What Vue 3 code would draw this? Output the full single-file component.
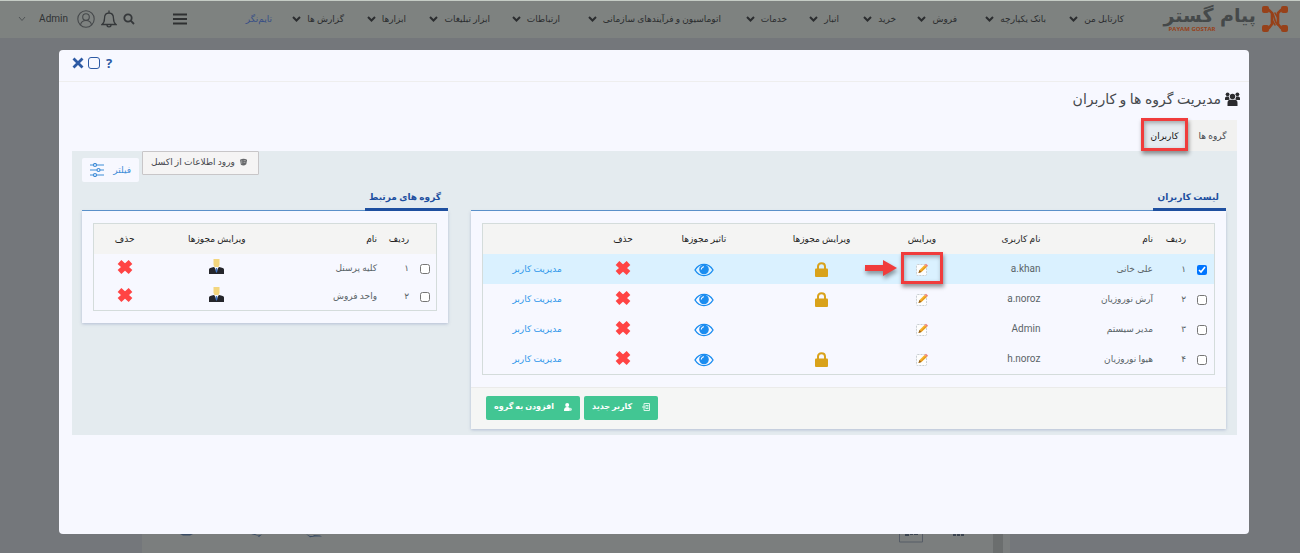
<script setup>
import { ref } from 'vue'

const menu = [
  'کارتابل من',
  'بانک یکپارچه',
  'فروش',
  'خرید',
  'انبار',
  'خدمات',
  'اتوماسیون و فرآیندهای سازمانی',
  'ارتباطات',
  'ابزار تبلیغات',
  'ابزارها',
  'گزارش ها',
]

const users = ref([
  { no: '۱', name: 'علی خانی', login: 'a.khan', lock: true, checked: true },
  { no: '۲', name: 'آرش نوروزیان', login: 'a.noroz', lock: true, checked: false },
  { no: '۳', name: 'مدیر سیستم', login: 'Admin', lock: false, checked: false },
  { no: '۴', name: 'هیوا نوروزیان', login: 'h.noroz', lock: true, checked: false },
])

const groups = ref([
  { no: '۱', name: 'کلیه پرسنل', checked: false },
  { no: '۲', name: 'واحد فروش', checked: false },
])
</script>

<template>
  <div class="page" dir="rtl">
    <header class="topbar">
      <a href="#" class="brand">
        <svg class="mark" viewBox="0 0 26 26" aria-hidden="true">
          <g fill="none" stroke="#974119" stroke-width="2.600" stroke-linecap="round">
            <path d="M4 4h3l3 3v11l-3 4H4" />
            <path d="M22 4h-3l-3 3v11l3 4h3" />
            <path d="M10 7c3 2 2 10 6 12" stroke-width="1.800" />
            <path d="M13 7l3 5M10 14l3 5" stroke-width="1.500" />
          </g>
          <g fill="#974119">
            <rect x="0" y="0" width="7" height="7" rx="2" />
            <rect x="19" y="0" width="7" height="7" rx="2" />
            <rect x="0" y="19" width="7" height="7" rx="2" />
            <rect x="19" y="19" width="7" height="7" rx="2" />
          </g>
        </svg>
        <span class="word"><strong>پیام گستر</strong><small>PAYAM GOSTAR</small></span>
      </a>
      <nav class="menu">
        <a v-for="item in menu" :key="item" href="#">
          {{ item }}
          <svg viewBox="0 0 9 6" aria-hidden="true"><path d="M1 1l3.500 3.500L8 1" /></svg>
        </a>
        <a href="#" class="timer">تایم‌نگر</a>
      </nav>
      <button class="icon burger" aria-label="menu">
        <svg viewBox="0 0 14 12"><path d="M0 1.500h14M0 6h14M0 10.500h14" stroke="#2e3031" stroke-width="1.800" /></svg>
      </button>
      <div class="account">
        <button class="icon" aria-label="search">
          <svg width="12" height="12" viewBox="0 0 12 12" fill="none" stroke="#35383a" stroke-width="1.800"><circle cx="5" cy="5" r="3.700" /><path d="M7.700 7.700l3.300 3.300" /></svg>
        </button>
        <button class="icon" aria-label="notifications">
          <svg width="16" height="18" viewBox="0 0 16 18" fill="none" stroke="#35383a" stroke-width="1.300"><path d="M1 14.500c2.500-2 2.500-3.500 2.500-6C3.500 5 5 3 8 3s4.500 2 4.500 5.500c0 2.500 0 4 2.500 6zM8 3V.500M6 15c0 2.500 4 2.500 4 0" /></svg>
        </button>
        <button class="icon" aria-label="profile">
          <svg width="18" height="18" viewBox="0 0 18 18" fill="none" stroke="#45484a" stroke-width="1.100"><circle cx="9" cy="9" r="8.200" /><circle cx="9" cy="7" r="3.300" /><path d="M3.500 15c.5-3 2.500-4.500 5.500-4.500s5 1.500 5.500 4.500" /></svg>
        </button>
        <a href="#" class="me">Admin</a>
        <svg class="thin" width="8" height="6" viewBox="0 0 8 6" aria-hidden="true"><path d="M1 1l3 3.500 3-3.500" fill="none" stroke="#505456" /></svg>
      </div>
    </header>

    <main class="dialog">
      <div class="titlebar">
        <button class="icon" aria-label="close">
          <svg width="12" height="12" viewBox="0 0 12 12"><path d="M1.500 1.500l9 9M10.500 1.500l-9 9" stroke="#2d5aa4" stroke-width="2.800" /></svg>
        </button>
        <button class="icon square" aria-label="maximize"></button>
        <button class="icon help">?</button>
      </div>

      <h1>
        <svg width="15" height="14" viewBox="0 0 15 14" fill="#2b2b2e" aria-hidden="true">
          <circle cx="2.600" cy="2.300" r="1.900" /><circle cx="12.400" cy="2.300" r="1.900" /><circle cx="7.500" cy="4.500" r="2.700" />
          <path d="M0 8V6.500C0 5 1 4.500 2.500 4.500h1.300c.2 1.300.6 2 1 2.700L3.500 8zM15 8V6.500c0-1.500-1-2-2.500-2h-1.300c-.2 1.300-.6 2-1 2.700l1.300.8zM2.500 14v-3c0-2 1-3.200 3-3.200h4c2 0 3 1.200 3 3.200v3z" />
        </svg>
        مدیریت گروه ها و کاربران
      </h1>

      <div class="tabs" role="tablist">
        <button role="tab" aria-selected="false">گروه ها</button>
        <button role="tab" class="active" aria-selected="true">کاربران</button>
      </div>

      <div class="panel">
        <div class="tools">
          <button class="excel">
            <svg width="8" height="8" viewBox="0 0 8 8" aria-hidden="true"><path d="M0 1.500Q4-.5 8 1.500L7 6.500Q4 9 1 7z" fill="#66676a" /><path d="M2 2v4M4 2.500h2.500M4 4.500h2" stroke="#bbb" stroke-width=".8" /></svg>
            ورود اطلاعات از اکسل
          </button>
          <button class="filter">
            فیلتر
            <svg width="14" height="14" viewBox="0 0 14 14" fill="none" stroke="#3f8dd8" stroke-width="1.200" aria-hidden="true"><path d="M0 2h14M0 7h14M0 12h14" /><g fill="#f7f8ff"><circle cx="5" cy="2" r="1.500" /><circle cx="8.500" cy="7" r="1.500" /><circle cx="5" cy="12" r="1.500" /></g></svg>
          </button>
        </div>

        <div class="columns">
          <section class="users">
            <div class="heading"><h2>لیست کاربران</h2></div>
            <div class="card">
              <div class="body">
                <table>
                  <colgroup>
                    <col class="u1" /><col class="u2" /><col class="u3" /><col class="u4" /><col class="u5" /><col class="u6" /><col class="u7" /><col class="u5" /><col class="u9" />
                  </colgroup>
                  <thead>
                    <tr>
                      <th></th><th>ردیف</th><th>نام</th><th>نام کاربری</th>
                      <th class="mid">ویرایش</th><th class="mid">ویرایش مجوزها</th><th class="mid">تاثیر مجوزها</th><th class="mid">حذف</th><th></th>
                    </tr>
                  </thead>
                  <tbody>
                    <tr v-for="(u, i) in users" :key="u.login" :class="{ on: u.checked }">
                      <td class="mid"><input v-model="u.checked" type="checkbox" :aria-label="u.name" /></td>
                      <td>{{ u.no }}</td>
                      <td>{{ u.name }}</td>
                      <td><bdi>{{ u.login }}</bdi></td>
                      <td class="mid">
                        <div class="spot">
                          <button class="icon" aria-label="ویرایش">
                            <svg width="12" height="13" viewBox="0 0 12 13"><rect x=".5" y="1.500" width="10" height="11" rx="1" fill="#fdfdfd" stroke="#c9cfd3" stroke-dasharray="2 1" /><path d="M2.500 10l1-3L8.500 2l2.500 2L5.500 9z" fill="#f5b32c" /><path d="M8.500 2L10 .8l2 1.700L11 4z" fill="#f0837a" /><path d="M2.500 10l1-3 2 2z" fill="#8a5a24" /><path d="M5 8.500l5-5" stroke="#d98614" stroke-width=".9" /></svg>
                          </button>
                          <template v-if="i === 0">
                            <span class="ring"></span>
                            <svg class="arrow" width="32" height="16" viewBox="0 0 32 16" aria-hidden="true"><path d="M0 5h18V0l14 8-14 8v-5H0z" fill="#f03c3c" /></svg>
                          </template>
                        </div>
                      </td>
                      <td class="mid">
                        <button v-if="u.lock" class="icon" aria-label="ویرایش مجوزها">
                          <svg width="13" height="15" viewBox="0 0 13 15"><path d="M3 7V4.500C3 2.500 4.300 1.200 6.500 1.200S10 2.500 10 4.500V7" fill="none" stroke="#d9a21a" stroke-width="2" /><rect y="6.500" width="13" height="8.500" rx="1" fill="#d9a21a" /></svg>
                        </button>
                      </td>
                      <td class="mid">
                        <button class="icon" aria-label="تاثیر مجوزها">
                          <svg width="20" height="14" viewBox="0 0 20 14"><path d="M1 7c4.500-7.500 13.500-7.500 18 0-4.500 7.500-13.500 7.500-18 0z" fill="none" stroke="#1b8df0" stroke-width="1.400" /><circle cx="10" cy="6.500" r="4.800" fill="#1b8df0" /><path d="M7.300 6.500A2.700 2.700 0 0 1 10 3.800" fill="none" stroke="#f7f8ff" stroke-width="1.100" /></svg>
                        </button>
                      </td>
                      <td class="mid">
                        <button class="icon cross" aria-label="حذف">
                          <svg width="16" height="16" viewBox="0 0 16 16"><path d="M2.500 3l11 10M13.500 3l-11 10" stroke="#ff4444" stroke-width="5.500" stroke-linejoin="round" /></svg>
                        </button>
                      </td>
                      <td class="mid"><a href="#">مدیریت کاربر</a></td>
                    </tr>
                  </tbody>
                </table>
              </div>
              <footer>
                <button class="green">
                  <svg width="8" height="8" viewBox="0 0 8 8" fill="none" stroke="#d9f5e9" aria-hidden="true"><path d="M2 .5h5.500v7H2zM0 4h4M3.500 2.500h3M4.500 4h2M3.500 5.500h3" /></svg>
                  کاربر جدید
                </button>
                <button class="green">
                  <svg width="8" height="8" viewBox="0 0 8 8" fill="#fff" aria-hidden="true"><circle cx="3.200" cy="2" r="2" /><path d="M0 8c0-3 1-4 3.200-4 1 0 1.800.3 2.300.8V8z" /><circle cx="6.300" cy="6.300" r="1.600" opacity=".7" /></svg>
                  افزودن به گروه
                </button>
              </footer>
            </div>
          </section>

          <section class="groups">
            <div class="heading"><h2>گروه های مرتبط</h2></div>
            <div class="card">
              <div class="body">
                <table>
                  <colgroup>
                    <col class="g1" /><col class="g2" /><col class="g3" /><col class="g4" /><col class="g5" />
                  </colgroup>
                  <thead>
                    <tr><th></th><th>ردیف</th><th>نام</th><th class="mid">ویرایش مجوزها</th><th class="mid">حذف</th></tr>
                  </thead>
                  <tbody>
                    <tr v-for="g in groups" :key="g.no">
                      <td class="mid"><input v-model="g.checked" type="checkbox" :aria-label="g.name" /></td>
                      <td>{{ g.no }}</td>
                      <td>{{ g.name }}</td>
                      <td class="mid">
                        <button class="icon cross" aria-label="ویرایش مجوزها">
                          <svg width="15" height="15" viewBox="0 0 15 15"><path d="M4.500 0h6v6l-1.500 3h-3l-1.500-3z" fill="#f3d67e" /><path d="M0 15v-4.500C0 9 2 8.500 5 8l2.500 2L10 8c3 .5 5 1 5 2.500V15z" fill="#25262b" /><path d="M5.500 8h4l-2 5z" fill="#f4f6fb" /><path d="M7 9h1l.5 3-1 2-1-2z" fill="#3f74c4" /></svg>
                        </button>
                      </td>
                      <td class="mid">
                        <button class="icon cross" aria-label="حذف">
                          <svg width="16" height="16" viewBox="0 0 16 16"><path d="M2.500 3l11 10M13.500 3l-11 10" stroke="#ff4444" stroke-width="5.500" /></svg>
                        </button>
                      </td>
                    </tr>
                  </tbody>
                </table>
              </div>
            </div>
          </section>
        </div>
      </div>
    </main>

    <div class="behind" aria-hidden="true">
      <svg width="170" height="5" viewBox="0 0 170 5" fill="#3a4c64"><path d="M1 0h13l-3 1.500H4zM72 0h4l3 1.500 4-1-3 2.500-2-1.500zM127 0l4 2h4l-1-1 7 .500 2 1h-7l-5 .800z" /></svg>
      <svg class="pager" width="72" height="9" viewBox="0 0 72 9"><path d="M.5 0v8h23V0" fill="none" stroke="#565c66" /><path d="M6 0h4v2H6zM11 0h3v1h-3zM15 0h4v1h-4zM54 0h3v2h-3zM58 0h3v2h-3zM62 0h3v2h-3z" fill="#3b4450" /></svg>
      <span class="rail"></span>
    </div>
  </div>
</template>

<style>
body {
  background: #74777b;
}
</style>

<style scoped>
* {
  box-sizing: border-box;
}
.page {
  display: flex;
  flex-direction: column;
  min-height: 100vh;
  background: #74777b;
  color: #45484d;
  font: 9px/16px Roboto, "DejaVu Sans", sans-serif;
}
a {
  color: inherit;
  text-decoration: none;
}
button {
  margin: 0;
  font: inherit;
  color: inherit;
  border: 0;
  white-space: nowrap;
  cursor: pointer;
}
.icon {
  display: inline-flex;
  padding: 0;
  background: none;
}
.topbar {
  display: flex;
  align-items: center;
  height: 38px;
  padding: 0 12px 2px;
  border-top: 1px solid #c5ccc5;
  background: #7e8280;
}
.brand {
  display: flex;
  align-items: center;
  gap: 6px;
  width: 126px;
}
.mark {
  width: 26px;
  height: 26px;
  flex: none;
}
.word {
  display: flex;
  flex-direction: column;
  white-space: nowrap;
}
.word strong {
  font: bold 19px/22px "DejaVu Sans", sans-serif;
  color: #45494a;
}
.word small {
  padding-left: 5px;
  font: bold 6px/7px "Open Sans", sans-serif;
  color: #974119;
  text-align: left;
}
.menu {
  flex: 1;
  display: grid;
  grid-template-columns: 78fr 89fr 61fr 57fr 52fr 66fr 161fr 70fr 84fr 62fr 72fr 85fr;
  margin-right: 38px;
  color: #2b2d2f;
}
.menu a {
  display: flex;
  align-items: center;
  gap: 6px;
  min-width: 0;
  white-space: nowrap;
}
.menu svg {
  width: 9px;
  height: 6px;
  fill: none;
  stroke: #2b2d2f;
  stroke-width: 2;
}
.menu .timer {
  color: #374e86;
}
.burger svg {
  width: 14px;
  height: 12px;
}
.account {
  display: flex;
  align-items: center;
  gap: 6px;
  width: 161px;
  padding-right: 38px;
}
.me {
  margin-right: 3px;
  font-size: 10px;
  color: #303335;
}
.thin {
  margin-right: 7px;
}
.dialog {
  flex: 1;
  margin: 12px 51px 0 59px;
  padding-bottom: 98px;
  border-radius: 4px;
  background: #f7f8ff;
}
.titlebar {
  display: flex;
  direction: ltr;
  align-items: center;
  gap: 4px;
  height: 32px;
  padding: 0 13px 6px;
  border-bottom: 1px solid #eeeeee;
}
.square {
  width: 12px;
  height: 12px;
  border: 1px solid #2d5aa4;
  border-radius: 3px;
}
.help {
  padding-left: 2px;
  font: bold 13px/16px "Open Sans", sans-serif;
  color: #2d5aa4;
}
h1 {
  display: flex;
  align-items: center;
  gap: 4px;
  margin: 5px 9px 0;
  font-size: 14px;
  line-height: 24px;
  font-weight: normal;
}
.tabs {
  display: flex;
  margin: 9px 12px 0;
}
.tabs button {
  width: 49px;
  height: 31px;
  padding: 0;
  background: #f1f1f0;
}
.tabs .active {
  position: relative;
  width: 47px;
  background: #e5ebf0;
  color: #111111;
}
.tabs .active::after,
.ring {
  position: absolute;
  border: 3px solid #f03c3c;
  box-shadow: 1px 3px 4px rgba(0, 0, 0, 0.4), inset 1px 2px 4px rgba(0, 0, 0, 0.3);
}
.tabs .active::after {
  content: "";
  inset: -2px 0 0 0;
}
.panel {
  margin: 0 12px 0 13px;
  padding: 0 11px 6px 10px;
  background: #e4ebef;
}
.tools {
  display: flex;
  direction: ltr;
  flex-direction: row-reverse;
  justify-content: flex-end;
  gap: 3px;
}
.tools button {
  display: flex;
  direction: rtl;
  align-items: center;
  height: 24px;
}
.excel {
  gap: 5px;
  width: 117px;
  padding: 0 11px 2px 8px;
  border: 1px solid #c8c6c8;
  border-radius: 1px;
  background: #f5f4f4;
}
.filter {
  justify-content: space-between;
  width: 57px;
  padding: 0 8px;
  margin-top: 7px;
  border-radius: 2px;
  background: #f7f8ff;
  color: #3f8dd8;
}
.columns {
  display: flex;
  align-items: flex-start;
  gap: 23px;
  margin-top: 6px;
}
.users {
  flex: 755;
}
.groups {
  flex: 366;
}
.heading {
  display: flex;
  border-bottom: 1px solid #5b93cc;
}
h2 {
  margin: 0 0 -1px;
  padding: 0 7px 2px 4px;
  border-bottom: 3px solid #1e4f9f;
  font-size: 9px;
  line-height: 18px;
  color: #1e4f9f;
}
.card {
  background: #f7f8ff;
  box-shadow: 0 1px 3px rgba(90, 110, 160, 0.35);
}
.body {
  padding: 12px 11px;
}
table {
  width: 100%;
  table-layout: fixed;
  border-collapse: separate;
  border-spacing: 0;
  border: 1px solid #d4dcdb;
}
th,
td {
  padding: 0 4px 0 0;
  text-align: right;
  white-space: nowrap;
  height: 30px;
}
th {
  background: #f4f4f3;
  font-weight: normal;
  color: #222222;
}
td {
  color: #5a6468;
}
.groups td {
  height: 28px;
}
.mid {
  padding: 0;
  text-align: center;
}
.on td {
  background: #daf1ff;
}
bdi {
  font-size: 10px;
}
td .icon,
td input {
  vertical-align: middle;
}
td .cross {
  margin-bottom: 3px;
}
input {
  width: 10px;
  height: 10px;
  margin: 0;
}
td a {
  color: #2e97ea;
}
.spot {
  position: relative;
  display: inline-block;
}
.ring {
  top: -9px;
  left: -15px;
  width: 42px;
  height: 32px;
}
.arrow {
  position: absolute;
  top: -1px;
  left: -51px;
  filter: drop-shadow(1px 3px 2px rgba(0, 0, 0, 0.4));
}
.u1 { width: 24px; }
.u2 { width: 33px; }
.u3 { width: 15.4%; }
.u4 { width: 12.4%; }
.u5 { width: 8.7%; }
.u6 { width: 18.8%; }
.u7 { width: 13.4%; }
.g1 { width: 23px; }
.g2 { width: 32px; }
.g3 { width: 30%; }
.g4 { width: 36%; }
footer {
  display: flex;
  justify-content: flex-end;
  gap: 4px;
  padding: 8px 15px 9px;
  border-top: 1px solid #ebebea;
  background: #f5f6f5;
}
.green {
  display: flex;
  align-items: center;
  gap: 10px;
  height: 24px;
  padding: 0 8px 2px;
  border-radius: 2px;
  background: #42c693;
  color: #ffffff;
  font-size: 8px;
  font-weight: bold;
}
.behind {
  display: flex;
  direction: ltr;
  align-items: flex-start;
  height: 19px;
  margin: 0 290px 0 142px;
  padding-left: 37px;
  background: #7b7e7e;
}
.pager {
  margin-left: auto;
}
.rail {
  align-self: stretch;
  width: 10px;
  margin: 0 7px 0 22px;
  background: #6b6e6e;
}
</style>
